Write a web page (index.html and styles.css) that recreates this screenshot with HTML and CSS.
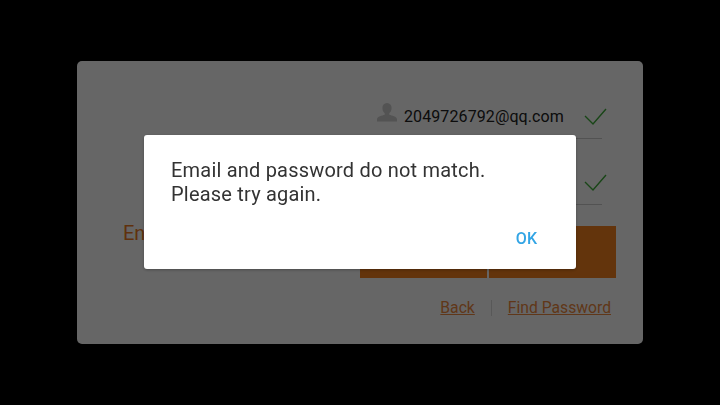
FILE: index.html
```html
<!DOCTYPE html>
<html lang="en">

<head>
    <meta charset="UTF-8">
    <title>Login</title>
    <link rel="stylesheet" href="styles.css">
</head>

<body>
    <div class="card">
        <div class="field">
            <svg class="user" width="22" height="22" viewBox="0 0 22 22">
                <path d="M11 1c3 0 4.600 2.200 4.600 5 0 2.300-1 4.300-2.300 5.300v1.500c2.500.8 7.700 1.800 7.700 4.400v2.300H1v-2.300c0-2.600 5.200-3.600 7.700-4.400v-1.500C7.400 10.300 6.400 8.300 6.400 6c0-2.800 1.600-5 4.600-5z" />
            </svg>
            <span class="value">2049726792@qq.com</span>
            <svg class="check" width="24" height="20" viewBox="0 0 24 20">
                <path d="M2 9l8 8L23 2" />
            </svg>
        </div>
        <div class="field second">
            <svg class="check" width="24" height="20" viewBox="0 0 24 20">
                <path d="M2 9l8 8L23 2" />
            </svg>
        </div>
        <div class="actions">
            <span class="prompt">Enter</span>
            <div class="buttons">
                <div class="btn"></div>
                <div class="btn"></div>
            </div>
        </div>
        <div class="links">
            <a href="#">Back</a>
            <span class="sep"></span>
            <a href="#">Find Password</a>
        </div>
    </div>

    <div class="overlay">
        <div class="dialog">
            <p class="message">Email and password do not match.<br>Please try again.</p>
            <div class="dialog-foot">
                <a class="ok" href="#">OK</a>
            </div>
        </div>
    </div>
</body>

</html>
```

FILE: styles.css
```css
html,
body {
    margin: 0;
    height: 100%;
}

body {
    background: #000;
    font-family: Roboto, sans-serif;
    padding: 61px 77px;
    box-sizing: border-box;
    overflow: hidden;
}

.card {
    width: 566px;
    height: 283px;
    background: #fff;
    border-radius: 5px;
    box-sizing: border-box;
    padding: 29px 28px 0 46px;
}

.field {
    height: 49px;
    width: 225px;
    margin-left: auto;
    margin-right: 13px;
    border-bottom: 1px solid #ccc;
    display: flex;
    align-items: center;
    box-sizing: border-box;
    padding-top: 5px;
}

.field.second {
    margin-top: 17px;
    justify-content: flex-end;
}

.user {
    fill: #d0d0d0;
    margin: -8px 6px 0 -1px;
}

.value {
    font-size: 16px;
    letter-spacing: 0.1px;
    color: #222;
    flex: 1;
    white-space: nowrap;
}

.check {
    fill: none;
    stroke: #3fae3b;
    stroke-width: 1.4;
    margin-right: -5px;
}

.actions {
    display: flex;
    justify-content: space-between;
    margin-top: 21px;
}

.prompt {
    font-size: 20px;
    color: #f07c1e;
    margin-top: -5px;
}

.buttons {
    display: flex;
    gap: 2px;
    margin-right: -1px;
}

.btn {
    width: 127px;
    height: 52px;
    background: #f8821e;
}

.links {
    display: flex;
    justify-content: flex-end;
    align-items: center;
    margin-top: 20px;
    font-size: 15.7px;
    margin-right: 4px;
}

.links a {
    color: #f08a40;
}

.sep {
    width: 1px;
    height: 16px;
    background: #ddd;
    margin: 0 16px;
}

.overlay {
    position: fixed;
    top: 0;
    left: 0;
    right: 0;
    bottom: 0;
    background: rgba(0, 0, 0, 0.6);
}

.dialog {
    position: absolute;
    left: 144px;
    top: 135px;
    width: 432px;
    height: 134px;
    background: #fff;
    border-radius: 3px;
    box-shadow: 0 1px 3px rgba(0, 0, 0, 0.3);
    box-sizing: border-box;
    padding: 23px 27px 0;
}

.message {
    margin: 0;
    font-size: 20px;
    line-height: 24px;
    letter-spacing: 0.2px;
    color: #333;
}

.dialog-foot {
    display: flex;
    justify-content: flex-end;
    margin-top: 23px;
    padding-right: 12px;
}

.ok {
    font-size: 16px;
    font-weight: 500;
    color: #33a5e5;
    text-decoration: none;
}
```
